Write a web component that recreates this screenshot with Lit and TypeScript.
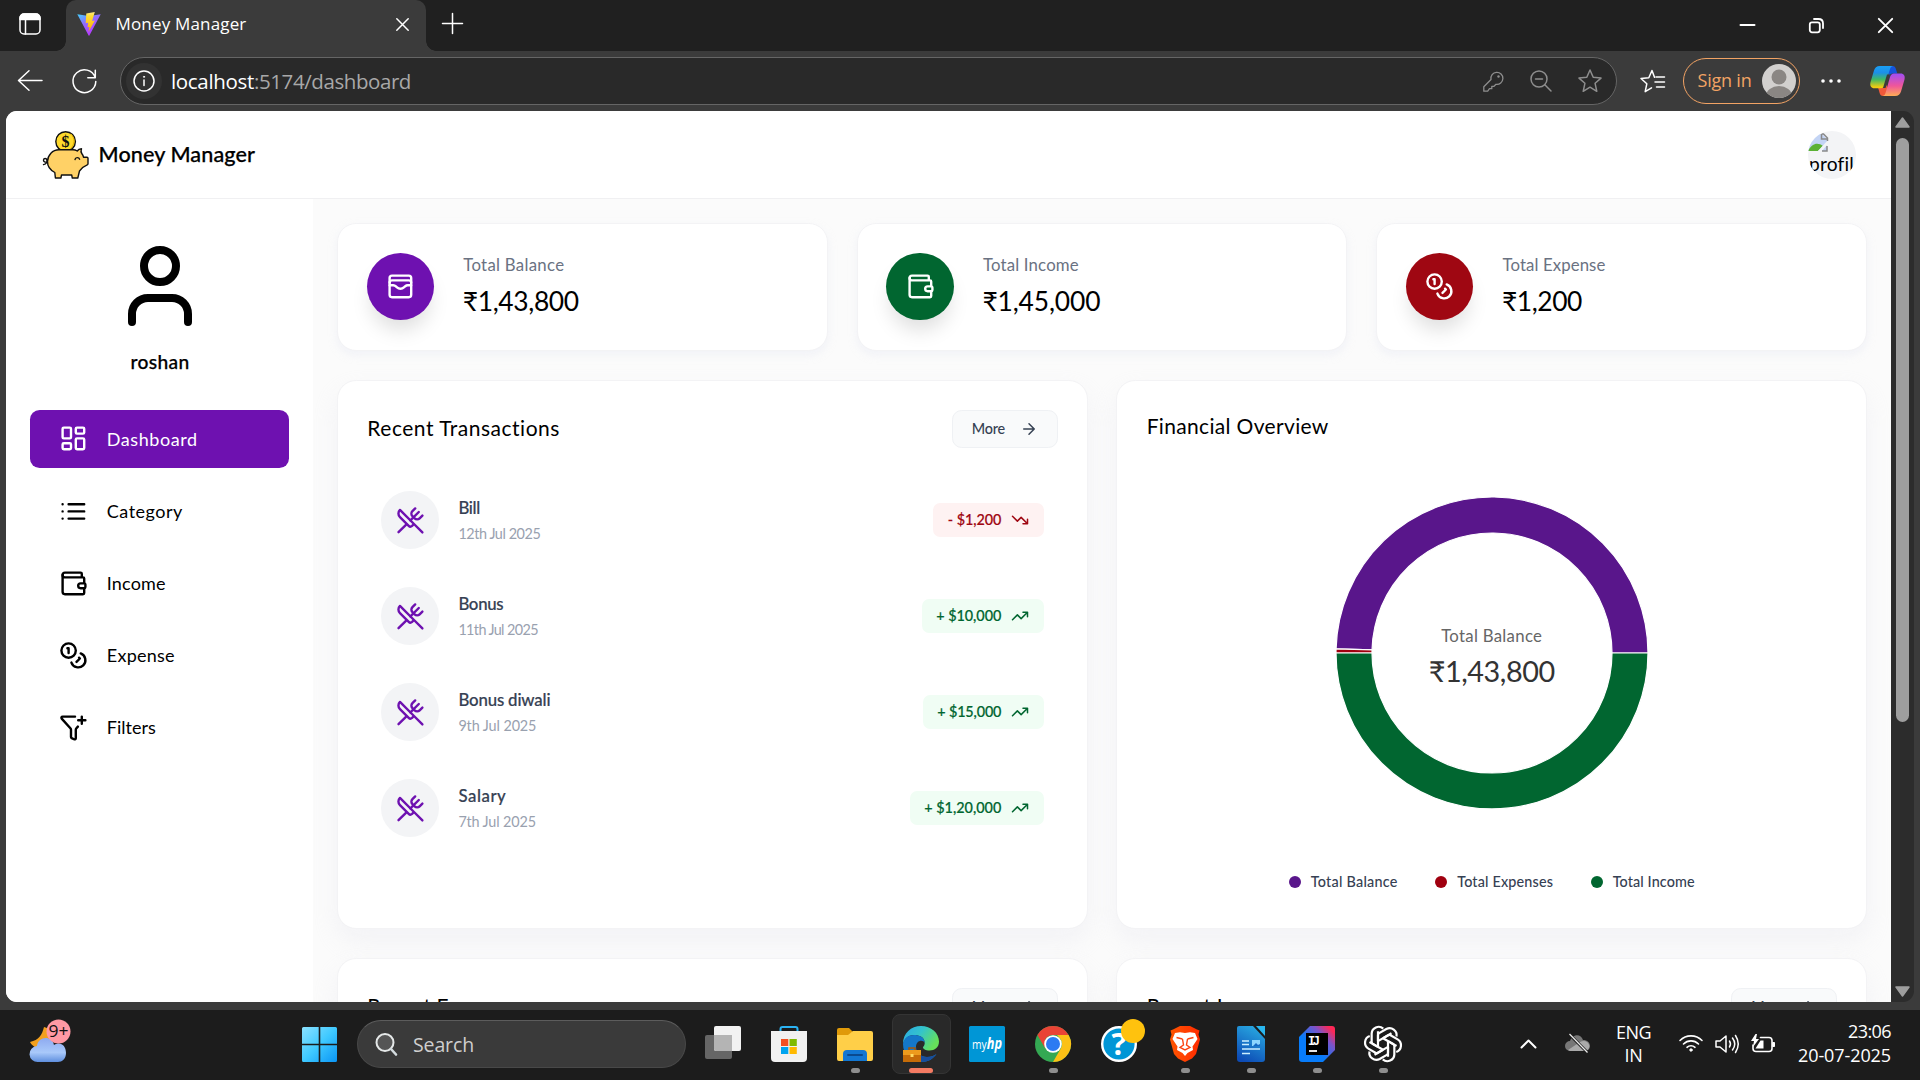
import { LitElement, html, svg, css, TemplateResult, SVGTemplateResult } from "lit";
import { customElement, property } from "lit/decorators.js";

const icons: Record<string, SVGTemplateResult> = {
  user: svg`<path d="M19 21v-2a4 4 0 0 0-4-4H9a4 4 0 0 0-4 4v2"/><circle cx="12" cy="7" r="4"/>`,
  dashboard: svg`<rect width="7" height="9" x="3" y="3" rx="1"/><rect width="7" height="5" x="14" y="3" rx="1"/><rect width="7" height="9" x="14" y="12" rx="1"/><rect width="7" height="5" x="3" y="16" rx="1"/>`,
  list: svg`<path d="M3 12h.01M3 18h.01M3 6h.01M8 12h13M8 18h13M8 6h13"/>`,
  wallet: svg`<path d="M19 7V4a1 1 0 0 0-1-1H5a2 2 0 0 0 0 4h15a1 1 0 0 1 1 1v4h-3a2 2 0 0 0 0 4h3a1 1 0 0 0 1-1v-2a1 1 0 0 0-1-1"/><path d="M3 5v14a2 2 0 0 0 2 2h15a1 1 0 0 0 1-1v-4"/>`,
  coins: svg`<circle cx="8" cy="8" r="6"/><path d="M18.09 10.37A6 6 0 1 1 10.34 18M7 6h1v4M16.71 13.88l.7.71-2.82 2.82"/>`,
  filter: svg`<path d="M13.354 3H3a1 1 0 0 0-.742 1.67l7.225 7.989A2 2 0 0 1 10 14v6a1 1 0 0 0 .553.895l2 1A1 1 0 0 0 14 21v-7a2 2 0 0 1 .517-1.341l1.218-1.348M16 6h6M19 3v6"/>`,
  cards: svg`<rect width="18" height="18" x="3" y="3" rx="2"/><path d="M3 9a2 2 0 0 1 2-2h14a2 2 0 0 1 2 2M3 11h3c.8 0 1.6.3 2.1.9l1.1.9c1.6 1.6 4.1 1.6 5.7 0l1.1-.9c.5-.5 1.3-.9 2.1-.9H21"/>`,
  utensils: svg`<path d="m16 2-2.3 2.3a3 3 0 0 0 0 4.2l1.8 1.8a3 3 0 0 0 4.2 0L22 8"/><path d="M15 15 3.3 3.3a4.2 4.2 0 0 0 0 6l7.3 7.3c.7.7 2 .7 2.8 0L15 15Zm0 0 7 7"/><path d="m2.1 21.8 6.4-6.3M19 5l-7 7"/>`,
  up: svg`<path d="M22 7l-8.5 8.5-5-5L2 17M16 7h6v6"/>`,
  down: svg`<path d="M22 17l-8.5-8.5-5 5L2 7M16 17h6v-6"/>`,
  arrow: svg`<path d="M5 12h14M12 5l7 7-7 7"/>`,
};

const icon = (name: string, cls: string) =>
  html`<svg class="lucide ${cls}" viewBox="0 0 24 24">${icons[name]}</svg>`;

/** Inline text whose tracking is adjusted so that it fills a given advance width. */
@customElement("fit-text")
export class FitText extends LitElement {
  @property({ type: Number }) w = 0;
  static styles = css`
    :host { display: inline-block; white-space: pre; }
    span { display: inline-block; }
  `;
  render() {
    return html`<span><slot></slot></span>`;
  }
  firstUpdated() {
    const span = this.renderRoot.querySelector("span") as HTMLElement;
    const natural = span.getBoundingClientRect().width;
    const count = (this.textContent || "").length;
    if (this.w && count) span.style.letterSpacing = `${(this.w - natural) / count}px`;
  }
}

const fit = (text: string, w: number) => html`<fit-text w=${w}>${text}</fit-text>`;

const base = css`
  * { box-sizing: border-box; }
  svg { display: block; flex: none; overflow: visible; }
  .lucide { fill: none; stroke: currentColor; stroke-width: 2; stroke-linecap: round; stroke-linejoin: round; }
`;

@customElement("browser-bar")
export class BrowserBar extends LitElement {
  static styles = [base, css`
    :host { display: block; font-family: "Open Sans", "Noto Sans", sans-serif; color: #fff; }
    .strip { display: flex; height: 51px; background: #202020; align-items: stretch; }
    .line { fill: none; stroke: currentColor; stroke-width: 1.5; stroke-linecap: round; stroke-linejoin: round; }
    .space { width: 66px; padding: 13px 0 0 19px; }
    .tab { position: relative; width: 360px; background: #3b3b3b; border-radius: 10px 10px 0 0; display: flex; align-items: center; padding: 0 17px 3px 11px; }
    .tab::before, .tab::after { content: ""; position: absolute; bottom: 0; width: 10px; height: 10px; }
    .tab::before { left: -10px; background: radial-gradient(circle at 0 0, #202020 9.5px, #3b3b3b 10px); }
    .tab::after { right: -10px; background: radial-gradient(circle at 100% 0, #202020 9.5px, #3b3b3b 10px); }
    .title { margin-left: 14.5px; font-size: 17px; flex: 1; padding-bottom: 2px; }
    .plus { padding: 13px 0 0 15.5px; flex: 1; }
    .win { display: flex; gap: 54px; padding: 18px 27px 0 0; }
    .bar { height: 60px; background: #3b3b3b; display: flex; align-items: center; padding: 0 15px 0 17px; }
    .reload { margin-left: 29px; }
    .address { margin-left: 23px; width: 1497px; height: 48px; border: 1.5px solid #656565; border-radius: 24px; background: #292929; display: flex; align-items: center; padding: 0 14.5px 0 5px; }
    .info { width: 36px; height: 36px; border-radius: 50%; background: #323232; display: grid; place-items: center; }
    .url { flex: 1; margin-left: 9px; font-size: 20.5px; line-height: 28px; color: #a8a8a8; }
    .host { color: #fff; }
    .tools { display: flex; color: #8e8e8e; align-items: center; }
    .tools svg + svg { margin-left: 26px; }
    .fav { margin-left: 23px; }
    .sign { margin-left: 18px; width: 117px; height: 46px; border: 1.5px solid #f2a364; border-radius: 23px; color: #f2a364; font-size: 18px; display: flex; align-items: center; padding: 0 3.5px 2px 13.5px; justify-content: space-between; }
    .sign svg { margin-top: 2px; }
    .dots { margin-left: 21px; }
    .copilot { margin-left: 28.5px; }
  `];
  render() {
    return html`
      <div class="strip">
        <div class="space"><svg class="line" width="22" height="22" viewBox="0 0 22 22"><rect x="1" y="1" width="20" height="20" rx="4"/><path d="M1 6.5V5a4 4 0 0 1 4-4h12a4 4 0 0 1 4 4v1.500z" fill="#fff"/><path d="M6.500 6v15"/></svg></div>
        <div class="tab">
          <svg width="24" height="24" viewBox="0 0 24 24"><defs><linearGradient id="v" x1="0" y1="0" x2=".6" y2="1"><stop offset="0" stop-color="#41d1ff"/><stop offset=".45" stop-color="#8f6bff"/><stop offset="1" stop-color="#bd34fe"/></linearGradient><linearGradient id="b" x1="0" y1="0" x2="0" y2="1"><stop offset="0" stop-color="#ffea83"/><stop offset=".2" stop-color="#ffdd35"/><stop offset="1" stop-color="#ffa800"/></linearGradient></defs><path d="M.3 2.300 12 4l11.700-1.700L12.400 23.500Q12 24 11.600 23.500z" fill="url(#v)"/><path d="M17.800 0 9.300 1.500 8.700 11.300l2.500-.5-.7 4.400 1.900-.3-1 5.100 6.500-11.400-2.800.4z" fill="url(#b)"/></svg>
          <div class="title">${fit("Money Manager", 131)}</div>
          <svg class="line" width="13" height="13" viewBox="0 0 13 13"><path d="m.8.800 11.400 11.400M12.200.8.800 12.200"/></svg>
        </div>
        <div class="plus"><svg class="line" width="21" height="21" viewBox="0 0 21 21"><path d="M10.500.5v20M.5 10.500h20"/></svg></div>
        <div class="win">
          <svg class="line" width="15" height="15" viewBox="0 0 15 15" stroke-linecap="butt"><path d="M.5 7h14" stroke-width="2"/></svg>
          <svg class="line" width="15" height="15" viewBox="0 0 15 15"><rect x=".8" y="4.300" width="10" height="10" rx="2.200" stroke-width="1.800"/><path d="M5 1h4.500Q14 1 14 5.500V10" stroke-width="1.800"/></svg>
          <svg class="line" width="15" height="15" viewBox="0 0 15 15"><path d="m.8.800 13.400 13.400M14.200.8.800 14.200" stroke-width="1.900"/></svg>
        </div>
      </div>
      <div class="bar">
        <svg class="line" width="26" height="22" viewBox="0 0 26 22"><path d="M25 10.500H2M12 .8 1.500 10.500 12 20.200"/></svg>
        <svg class="line reload" width="25" height="25" viewBox="0 0 25 25"><path d="M23.200 8.500A11.400 11.400 0 1 0 23.800 12.500M23.300 1.200v7.500h-7.500"/></svg>
        <div class="address">
          <div class="info"><svg class="line" width="22" height="22" viewBox="0 0 22 22"><circle cx="11" cy="11" r="10"/><path d="M11 10v5.500"/><circle cx="11" cy="6.800" r=".6" fill="#fff" stroke-width=".8"/></svg></div>
          <div class="url"><span class="host">${fit("localhost", 83)}</span>${fit(":5174/dashboard", 157)}</div>
          <div class="tools">
            <svg class="line" width="21" height="21" viewBox="0 0 21 21"><path d="M8 8.500a6 6 0 1 1 5 4.800l-2 2H8.800v2.400H6.500l-1.800 2.500H.8v-4.500z" stroke-width="1.300"/><circle cx="15.500" cy="5.500" r="1.200" fill="currentColor" stroke="none"/></svg>
            <svg class="line" width="22" height="22" viewBox="0 0 22 22"><circle cx="9" cy="9" r="8"/><path d="M5.500 9h7M14.800 14.800l6.200 6.200"/></svg>
            <svg class="line" width="24" height="24" viewBox="0 0 24 24"><path d="m12 1 3.200 7.300 7.800.8-5.900 5.200 1.700 8L12 18.200 5.200 22.300l1.700-8L1 9.100l7.800-.8z"/></svg>
          </div>
        </div>
        <svg class="line fav" width="25" height="25" viewBox="0 0 25 25"><path d="M14.500 8.300 12 1.500 8.800 8.800 1 9.500l5.800 5.300-1.600 7.900 6.300-3.800M16 8h8.500M15 13h9.500M16.500 18h8"/></svg>
        <div class="sign">${fit("Sign in", 54)}
          <svg width="34" height="34" viewBox="0 0 34 34"><defs><clipPath id="c"><circle cx="17" cy="17" r="17"/></clipPath></defs><g clip-path="url(#c)"><rect width="34" height="34" fill="#d2d0ce"/><circle cx="17" cy="13" r="7.500" fill="#8a8683"/><ellipse cx="17" cy="32" rx="13" ry="10" fill="#8a8683"/></g></svg>
        </div>
        <svg class="dots" width="20" height="4" viewBox="0 0 20 4" fill="#fff"><circle cx="2" cy="2" r="1.800"/><circle cx="10" cy="2" r="1.800"/><circle cx="18" cy="2" r="1.800"/></svg>
        <svg class="copilot" width="35" height="32" viewBox="0 0 35 32"><defs>
          <linearGradient id="p1" x1="0" y1="0" x2="0" y2="1"><stop offset="0" stop-color="#1aa0f5"/><stop offset=".3" stop-color="#1c8fe8"/><stop offset=".6" stop-color="#3fb865"/><stop offset=".95" stop-color="#f2cb10"/></linearGradient>
          <linearGradient id="p2" x1="0" y1="0" x2="0" y2="1"><stop offset="0" stop-color="#a04df5"/><stop offset=".55" stop-color="#f0569a"/><stop offset="1" stop-color="#ffad55"/></linearGradient></defs>
          <path d="M17 1h5.500c2 0 2.800 1.200 3.400 3l1.400 4.500h-4.500c-2.500 0-3.300 1.500-4 4z" fill="#1554dd"/>
          <path d="M17.500 31H13c-2 0-2.800-1.200-3.400-3L8.200 23h4.600c2.500 0 3.300-1.500 4-4z" fill="#f0593a"/>
          <path d="M10 1h13c-2 .3-2.700 1.800-3.300 4L15 20c-.7 2.200-2 3.200-4 3.200H4.500c-3.500 0-4.800-2.500-4-6L4 5.500C4.800 2.800 6.500 1 10 1z" fill="url(#p1)"/>
          <path d="M25 31H12.500c2-.3 2.700-1.800 3.300-4L20 12c.7-2.200 2-3.400 4-3.400h6.500c3.500 0 4.800 2.500 4 6L31 26.500c-.8 2.700-2.500 4.500-6 4.500z" fill="url(#p2)"/>
          <path d="M20 9.500h-3L13 23h2.500z" fill="#3b3b3b"/></svg>
      </div>`;
  }
}

interface Tx { title: string; tw: number; date: string; dw: number; amount: string; aw: number; income: boolean; }
const transactions: Tx[] = [
  { title: "Bill", tw: 21.5, date: "12th Jul 2025", dw: 82, amount: "- $1,200", aw: 53.5, income: false },
  { title: "Bonus", tw: 45, date: "11th Jul 2025", dw: 79.5, amount: "+ $10,000", aw: 65, income: true },
  { title: "Bonus diwali", tw: 92, date: "9th Jul 2025", dw: 78, amount: "+ $15,000", aw: 64, income: true },
  { title: "Salary", tw: 48, date: "7th Jul 2025", dw: 77.5, amount: "+ $1,20,000", aw: 77, income: true },
];
const menu: [string, string, number][] = [
  ["dashboard", "Dashboard", 91], ["list", "Category", 76], ["wallet", "Income", 59],
  ["coins", "Expense", 68], ["filter", "Filters", 49],
];
const stats: [string, string, string, number, string, number][] = [
  ["violet", "cards", "Total Balance", 101, "₹1,43,800", 116],
  ["green", "wallet", "Total Income", 96, "₹1,45,000", 118],
  ["red", "coins", "Total Expense", 103, "₹1,200", 80],
];
const slices = [
  { label: "Total Balance", value: 143800, color: "#59168b", w: 87 },
  { label: "Total Expenses", value: 1200, color: "#a0000f", w: 96 },
  { label: "Total Income", value: 145000, color: "#016630", w: 82 },
];

@customElement("money-dashboard")
export class MoneyDashboard extends LitElement {
  static styles = [base, css`
    :host { display: flex; flex-direction: column; height: 891px; overflow: hidden; background: #fbfbfb; font-family: Lato, "Open Sans", sans-serif; color: #000; }
    header { flex: none; height: 88px; background: #fff; border-bottom: 1px solid #f0f0f2; display: flex; align-items: center; padding: 0 35px; }
    .brand { flex: 1; margin-left: 9.5px; padding-bottom: 1px; font-size: 21.6px; font-weight: 500; -webkit-text-stroke: .25px; }
    .avatar { width: 48px; height: 48px; border-radius: 50%; background: #f3f4f6; overflow: hidden; font-size: 19.2px; line-height: 24px; padding-top: 2px; }
    .alt { padding: 1.5px 0 0 1px; }
    .body { display: flex; flex: 1; min-height: 0; }
    aside { flex: none; width: 307px; background: #fff; padding: 39px 24px 0; display: flex; flex-direction: column; }
    .user { width: 96px; height: 96px; margin: 0 auto; }
    .name { text-align: center; font-size: 19.2px; line-height: 28px; font-weight: 500; margin-top: 14px; padding-left: 1px; -webkit-text-stroke: .25px; }
    nav { margin-top: 34px; display: grid; gap: 14.4px; }
    .item { height: 57.700px; border-radius: 9.600px; display: flex; align-items: center; gap: 19.200px; padding: 0 28.800px; font-size: 18px; }
    .active { background: #6e11b0; color: #fff; }
    .i24 { width: 28.800px; height: 28.800px; }
    .i15 { width: 18px; height: 18px; }
    main { flex: 1; padding: 24px 24px 0; display: flex; flex-direction: column; gap: 29px; min-width: 0; }
    .three { flex: none; display: grid; grid-template-columns: repeat(3, 1fr); gap: 28.800px; }
    .two { flex: none; display: grid; grid-template-columns: 1fr 1fr; gap: 28.800px; }
    .card { background: #fff; border: 1px solid #f3f3f5; border-radius: 19.200px; box-shadow: 0 4px 8px rgba(224, 226, 240, .35); }
    .stat { height: 128px; display: flex; gap: 28.800px; padding: 28.800px; }
    .disc { width: 67.200px; height: 67.200px; border-radius: 50%; color: #fff; display: grid; place-items: center; box-shadow: 0 14px 20px -4px rgba(0, 0, 0, .13); }
    .violet { background: #6e11b0; } .green { background: #016630; } .red { background: #9f0712; }
    .label { font-size: 16.800px; line-height: 24px; color: #6a7282; margin: 0 0 4.500px .5px; }
    .value { font-size: 26.400px; line-height: 40px; }
    .panel { height: 549px; padding: 28.800px; box-shadow: 0 12px 24px rgba(224, 226, 236, .3); }
    .head { display: flex; justify-content: space-between; align-items: center; height: 38.400px; font-size: 21px; }
    .head > fit-text { margin-top: -2px; margin-left: .5px; }
    .head.plain { height: 34px; }
    .more { width: 106px; height: 38.400px; border: 1px solid #eff1f4; border-radius: 9.600px; background: #f9fafb; color: #364153; display: flex; align-items: center; justify-content: space-between; padding: 0 19px; font-size: 14.400px; font-weight: 500; }
    .more fit-text { margin-top: -1px; }
    .rows { margin: 43px 14px 0 14.700px; display: grid; gap: 38.400px; }
    .tx { height: 57.600px; display: flex; align-items: center; }
    .ring { width: 57.600px; height: 57.600px; border-radius: 50%; background: #f3f4f6; color: #6e11b0; display: grid; place-items: center; }
    .what { flex: 1; margin-left: 19.300px; }
    .t { font-size: 16.800px; line-height: 24px; font-weight: 500; color: #364153; -webkit-text-stroke: .2px; }
    .d { font-size: 14.400px; line-height: 19px; margin-top: 4px; color: #99a1af; }
    .badge { height: 34px; border-radius: 7.200px; padding: 0 14.500px; display: flex; align-items: center; gap: 10px; font-size: 14.400px; font-weight: 500; background: #f0fdf4; color: #016630; -webkit-text-stroke: .2px; }
    .badge fit-text { margin-top: -1px; }
    .expense { background: #fef2f2; color: #9f0712; }
    .chart { display: flex; flex-direction: column; align-items: center; padding-top: 49px; }
    .donut { display: grid; place-items: center; }
    .donut > * { grid-area: 1 / 1; }
    .center { text-align: center; padding-top: 7px; }
    .cl { font-size: 16.800px; line-height: 24px; color: #666; }
    .cv { font-size: 28.800px; line-height: 36px; color: #333; margin-top: 5px; }
    .legend { display: flex; gap: 37.500px; margin-top: 60px; font-size: 14.400px; font-weight: 500; color: #364153; }
    .key { display: flex; align-items: center; gap: 10px; line-height: 20px; }
    .key fit-text { margin-top: -1px; }
  `];

  private donut(): TemplateResult {
    const total = slices.reduce((sum, s) => sum + s.value, 0);
    const at = (r: number, a: number) => `${160 + r * Math.cos(a)} ${160 - r * Math.sin(a)}`;
    let start = 0;
    const arcs = slices.map((s) => {
      const end = start + (s.value / total) * Math.PI * 2;
      const large = end - start > Math.PI ? 1 : 0;
      const d = `M${at(156, start)}A156 156 0 ${large} 0 ${at(156, end)}L${at(120, end)}A120 120 0 ${large} 1 ${at(120, start)}Z`;
      start = end;
      return svg`<path d=${d} fill=${s.color} stroke="#fff" stroke-width="1.200"/>`;
    });
    return html`<svg width="320" height="320" viewBox="0 0 320 320">${arcs}</svg>`;
  }

  private more() {
    return html`<div class="more">${fit("More", 33)}${icon("arrow", "i15")}</div>`;
  }

  render() {
    return html`
      <header>
        <svg width="48" height="48" viewBox="0 0 48 48" stroke="#111" stroke-width="1.400" stroke-linejoin="round" stroke-linecap="round">
          <path d="M6.500 31c-2.200.6-4.200-.2-4-2 .2-1.900 3-2 3.400 0 .4 2.200-.8 4-3.400 4.600" fill="none"/>
          <circle cx="24.600" cy="10.500" r="9.800" fill="#ffda2d"/><path d="M30 3a9.500 9.500 0 0 1-1 15" fill="none" stroke="#e0b000" stroke-width="1"/>
          <text x="24.600" y="16" text-anchor="middle" font-size="16" font-family="Liberation Serif, serif" font-weight="700" fill="#111" stroke="none">$</text>
          <path d="M18 18.800h14c1.500 0 3 .5 4.200 1.200 1-1.500 2.600-2.200 4.300-2.200-.8 2-.7 3.500.4 5 .8 1 1.400 2.200 1.600 3.400h3.500c.7 0 1 .4 1 1v5.500c0 .8-.4 1.200-1.200 1.500-3.300 1.200-5.300 3.300-7.300 5.800L36.800 47h-5.500l-.6-3H20.500l-.6 3h-5.500l-.6-5.500C9.200 39 6.400 35 6.500 30.500 6.700 24 11.500 18.800 18 18.800z" fill="#ffd166"/>
          <path d="M34 28.500c.5-2.400 3.800-2.500 4.600-.3" fill="none"/>
        </svg>
        <div class="brand">${fit("Money Manager", 156.500)}</div>
        <div class="avatar">
          <svg width="20" height="18" viewBox="0 0 20 18"><path d="M0 1h14l5 5v12H0z" fill="#c3d4f5"/><path d="M0 18C4 10 10 9 15 13l-5 5z" fill="#5bb135"/><path d="M9 19 20 7v4l-7 8z" fill="#f3f4f6"/><path d="M13.500 1h2l4 4v3M13.500 1v5H19M19 13v5h-5" fill="none" stroke="#8a8a8a" stroke-width="1.500"/></svg>
          <div class="alt">${fit("profile", 55)}</div>
        </div>
      </header>
      <div class="body">
        <aside>
          ${icon("user", "user")}
          <div class="name">${fit("roshan", 59)}</div>
          <nav>${menu.map(([ic, label, w], i) => html`<div class="item ${i === 0 ? "active" : ""}">${icon(ic, "i24")}${fit(label, w)}</div>`)}</nav>
        </aside>
        <main>
          <div class="three">
            ${stats.map(([color, ic, label, lw, value, vw]) => html`
              <div class="card stat"><div class="disc ${color}">${icon(ic, "i24")}</div>
                <div><div class="label">${fit(label, lw)}</div><div class="value">${fit(value, vw)}</div></div></div>`)}
          </div>
          <div class="two">
            <div class="card panel">
              <div class="head">${fit("Recent Transactions", 193)}${this.more()}</div>
              <div class="rows">${transactions.map((t) => html`
                <div class="tx"><div class="ring">${icon("utensils", "i24")}</div>
                  <div class="what"><div class="t">${fit(t.title, t.tw)}</div><div class="d">${fit(t.date, t.dw)}</div></div>
                  <div class="badge ${t.income ? "" : "expense"}">${fit(t.amount, t.aw)}${icon(t.income ? "up" : "down", "i15")}</div></div>`)}
              </div>
            </div>
            <div class="card panel">
              <div class="head plain">${fit("Financial Overview", 182)}</div>
              <div class="chart">
                <div class="donut">${this.donut()}
                  <div class="center"><div class="cl">${fit("Total Balance", 101)}</div><div class="cv">${fit("₹1,43,800", 126)}</div></div></div>
                <div class="legend">${slices.map((s) => html`<div class="key"><svg width="12" height="12" viewBox="0 0 12 12"><circle cx="6" cy="6" r="6" fill=${s.color}/></svg>${fit(s.label, s.w)}</div>`)}</div>
              </div>
            </div>
          </div>
          <div class="two">
            <div class="card panel"><div class="head">${fit("Recent Expenses", 156)}${this.more()}</div></div>
            <div class="card panel"><div class="head">${fit("Recent Incomes", 148)}${this.more()}</div></div>
          </div>
        </main>
      </div>`;
  }
}

const petals = [0, 60, 120, 180, 240, 300];
const apps: { mark: string; art: SVGTemplateResult }[] = [
  { mark: "", art: svg`<rect x="0" y="9" width="27" height="24" rx="2" fill="#666"/><rect x="9" y="0" width="27" height="25" rx="2" fill="#f2f2f2"/><path d="M9 9h18v16H11q-2 0-2-2z" fill="#b4b4b4"/>` },
  { mark: "", art: svg`<path d="M9.500 7V3q0-2 2-2h13q2 0 2 2v4" fill="none" stroke="#2bb3f3" stroke-width="2"/><path d="M0 5h36v27q0 4-4 4H4q-4 0-4-4z" fill="#f1f1f1"/><path d="M10 13h7.300v7H10z" fill="#f25022"/><path d="M18.500 13h7.300v7h-7.300z" fill="#7fba00"/><path d="M10 21h7.300v7H10z" fill="#00a4ef"/><path d="M18.500 21h7.300v7h-7.300z" fill="#ffb900"/>` },
  { mark: "dot", art: svg`<path d="M0 4q0-2 2-2h10l4 4v6H0z" fill="#e09a09"/><path d="M0 9h11l5-4h18q2 0 2 2V33q0 2-2 2H2q-2 0-2-2z" fill="#ffcf48"/><path d="M6 35v-7q0-4 4-4h16q4 0 4 4v7z" fill="#1277d3"/><path d="M11 29h14" stroke="#0a4a8f" stroke-width="2" stroke-linecap="round"/>` },
  { mark: "wide", art: svg`<defs><linearGradient id="e1" x1="0" y1="0" x2="1" y2=".5"><stop offset="0" stop-color="#2aa8e6"/><stop offset=".5" stop-color="#34c4cb"/><stop offset="1" stop-color="#66e05a"/></linearGradient></defs><path d="M0 18C0 7 8 0 18 0s18 7 18 15.500c0 6-4.500 9-9.500 9-4 0-6.500-1.500-6.500-3 0-1 1.700-1.500 1.700-4.500C21.700 11 16 9 11 9 5 9 1.500 13 0 18z" fill="url(#e1)"/><path d="M0 18C1 12 5 9 11 9c5 0 10.700 2 10.700 8-1.500-4-8.700-3-8.700 4 0 6 5 10 11 10 4 0 7-1 9.500-3C30 33 25 36 18 36 8 36 0 29 0 18z" fill="#1477c9"/><path d="M13 21c0 6 5 10 11 10 4 0 7-1 9.500-3C30 33 25 36 18 36c-6 0-8-8-5-15z" fill="#174e9c"/><path d="M0 24h18v12H0z" fill="#c66c08"/><path d="M0 24h18v5H0z" fill="#ed9b1d"/><path d="M6 24v-2h6v2" fill="none" stroke="#a55505" stroke-width="1.500"/><path d="M7.500 28h3v3h-3z" fill="#ffda63"/>` },
  { mark: "", art: svg`<rect width="36" height="36" rx="1.500" fill="#0096d6"/><text x="18" y="23" text-anchor="middle" font-family="Open Sans, sans-serif" font-size="12.500" fill="#fff" textLength="30" lengthAdjust="spacingAndGlyphs">my<tspan font-weight="700" font-style="italic" font-size="15.500">hp</tspan></text>` },
  { mark: "dot", art: svg`<circle cx="18" cy="18" r="18" fill="#34a853"/><path d="M2.400 9A18 18 0 0 1 33.600 9H18a9 9 0 0 0-7.800 4.500L10 22z" fill="#e94335"/><path d="M33.600 9A18 18 0 0 1 18 36l7.800-13.500A9 9 0 0 0 25.800 13.500L22 9z" fill="#fbc116"/><circle cx="18" cy="18" r="8.800" fill="#fff"/><circle cx="18" cy="18" r="7" fill="#2c7bf2"/>` },
  { mark: "", art: svg`<circle cx="18" cy="18" r="16.800" fill="#0096d6" stroke="#fff" stroke-width="2.400"/><text x="18" y="29" text-anchor="middle" font-family="Open Sans, sans-serif" font-weight="700" font-size="31" fill="#fff">?</text><circle cx="32" cy="5" r="12" fill="#ffc20e"/>` },
  { mark: "dot", art: svg`<defs><linearGradient id="br" x1="0" y1="0" x2="1" y2="0"><stop offset="0" stop-color="#ff5601"/><stop offset="1" stop-color="#ff2a00"/></linearGradient></defs><path d="m9 2 4-2h10l4 2 3 1.500 2.500 1-1 4 1.500 5-4 14.500-4 4.500-7 3.500-7-3.500L7 28l-4-14.500 1.500-5-1-4L6 3.500z" fill="url(#br)"/><path d="m8 7 5-.8 5 .9 5-.9 5 .8 2.500 6-5 7.500.5 3.500-5.500 3L18 30l-2.500-3-5.500-3 .5-3.500-5-7.500z" fill="#fff"/><path d="m9.500 11.500 6 1.500M26.500 11.500l-6 1.500M15.500 13l1 6-3.500 2.500 5 2.500 5-2.500-3.500-2.500 1-6" fill="none" stroke="#fc4210" stroke-width="1.400"/>` },
  { mark: "dot", art: svg`<defs><linearGradient id="w" x1=".7" y1="0" x2=".3" y2="1"><stop offset="0" stop-color="#28a9e1"/><stop offset="1" stop-color="#0d4bb5"/></linearGradient></defs><path d="M6 0h14l12 13v20q0 3-3 3H7q-3 0-3-3V2q0-2 2-2z" fill="url(#w)"/><path d="M23 0h9v10z" fill="#29b6ee"/><path d="M9 15h7M9 18.500h7M9 23h18M9 27.500h8" stroke="#cceeff" stroke-width="1.600"/><path d="M19 14h8v6h-8z" fill="#8bd6ff"/><path d="m20 20 3-3 2 2 2-1v2z" fill="#1469c4"/>` },
  { mark: "dot", art: svg`<defs><linearGradient id="ij" x1="0" y1="1" x2="1" y2="0"><stop offset=".4" stop-color="#087cfa"/><stop offset=".7" stop-color="#7b53c9"/><stop offset=".9" stop-color="#fe2857"/></linearGradient></defs><path d="M11 0h22q3 0 3 3v21L24 36H3q-3 0-3-3V11z" fill="url(#ij)"/><rect x="7" y="7" width="22" height="22" fill="#000"/><text x="9" y="18.500" font-family="Liberation Mono, monospace" font-weight="700" font-size="12" fill="#fff" textLength="12">IJ</text><path d="M10 25h8" stroke="#fff" stroke-width="1.800"/>` },
  { mark: "dot", art: svg`${petals.map((a) => svg`<path transform="rotate(${a} 18 18)" d="M13 20.900V9.200Q13 7.800 14.200 7.100L21.300 3A7 7 0 0 1 31.500 10.500M18 12.200 26.500 7.300" fill="none" stroke="#fff" stroke-width="2.200"/>`)}` },
];

@customElement("task-bar")
export class TaskBar extends LitElement {
  static styles = [base, css`
    :host { display: flex; height: 70px; background: #1c1c1c; font-family: "Open Sans", "Noto Sans", sans-serif; color: #fff; font-size: 18px; padding-bottom: 2px; align-items: center; }
    .weather { width: 302px; padding-left: 29px; margin-top: -7px; }
    .search { margin-left: 20px; width: 329px; height: 48px; border-radius: 24px; background: #3a3a3a; border: 1px solid #484848; border-top-color: #5c5c5c; display: flex; align-items: center; padding: 0 17px; gap: 15px; color: #cfcfcf; font-size: 19.5px; }
    .apps { margin-left: 4px; display: flex; flex: 1; }
    .app { width: 66px; height: 60px; display: flex; flex-direction: column; align-items: center; justify-content: flex-end; }
    .tile { height: 60px; width: 59px; border-radius: 8px; display: flex; flex-direction: column; align-items: center; padding-top: 12px; gap: 6px; }
    .tile.wide { background: #292929; border: 1px solid #343434; padding-top: 11px; }
    .mark { width: 9px; height: 5px; border-radius: 3px; background: transparent; }
    .mark.dot { background: #8e8e8e; }
    .mark.wide { width: 24px; background: #f47b63; }
    .tray { display: flex; align-items: center; padding-right: 29px; }
    .cloud { margin-left: 28px; }
    .lang { margin-left: 24px; width: 40px; text-align: center; line-height: 23px; margin-top: -1px; }
    .status { display: flex; gap: 12px; margin-left: 25px; }
    .clock { margin-left: 23.500px; text-align: right; line-height: 24px; margin-top: -2px; }
    .line { fill: none; stroke: #fff; stroke-width: 2; stroke-linecap: round; stroke-linejoin: round; }
  `];
  render() {
    return html`
      <div class="weather"><svg width="42" height="44" viewBox="0 0 42 44"><defs><linearGradient id="cl" x1="0" y1="0" x2="0" y2="1"><stop offset="0" stop-color="#8eaaf0"/><stop offset=".6" stop-color="#a9c9fa"/><stop offset="1" stop-color="#5f8fde"/></linearGradient></defs>
        <path d="M15 8c-2 8-5 13-14 15 4 8 15 8 20 2V10z" fill="#f2a01e"/><path d="M9 43a8 8 0 0 1-1-16C9 17 23 16 25 26c6-4 12 0 12 8 0 6-4 9-8 9z" fill="url(#cl)"/><circle cx="29.500" cy="12.500" r="12" fill="#ff99a4"/><text x="29.500" y="18" font-family="Open Sans, sans-serif" font-size="16" text-anchor="middle" fill="#111" textLength="20" lengthAdjust="spacingAndGlyphs">9+</text></svg></div>
      <svg width="35" height="35" viewBox="0 0 35 35"><defs><linearGradient id="wn" x1="0" y1="0" x2="1" y2="1"><stop offset="0" stop-color="#8be1ff"/><stop offset=".5" stop-color="#3fc9ff"/><stop offset="1" stop-color="#0a95f5"/></linearGradient></defs><path d="M1.500 0H16.700v16.700H0V1.500Q0 0 1.500 0zM18.300 0h15.200Q35 0 35 1.500v15.200H18.300zM0 18.300h16.700V35H1.500Q0 35 0 33.500zM18.300 18.300H35v15.200q0 1.500-1.500 1.500H18.300z" fill="url(#wn)"/></svg>
      <div class="search"><svg width="23" height="23" viewBox="0 0 23 23"><circle cx="10" cy="9.500" r="8.500" fill="#555" stroke="#e5e8e8" stroke-width="2"/><path d="m16 16 5 5.500" stroke="#d4dcdf" stroke-width="2.600" stroke-linecap="round"/></svg>${fit("Search", 61)}</div>
      <div class="apps">${apps.map((a) => html`<div class="app"><div class="tile ${a.mark === "wide" ? "wide" : ""}"><svg width="36" height="36" viewBox="0 0 36 36">${a.art}</svg><div class="mark ${a.mark}"></div></div></div>`)}</div>
      <div class="tray">
        <svg class="line" width="17" height="10" viewBox="0 0 17 10"><path d="m1.500 8.500 7-7 7 7"/></svg>
        <svg class="cloud" width="25" height="20" viewBox="0 0 25 20"><path d="M5 17a5 5 0 0 1 0-10C7 0 16-1 18 6c9 0 9 11 2 11z" fill="#777"/><path d="M3 16 15 8c8-4 13 6 6 9H5z" fill="#aaa"/><path d="m4 0 18 18" stroke="#1c1c1c" stroke-width="3"/><path d="m4.500 0 18 18.500" stroke="#eee" stroke-width="1.200"/></svg>
        <div class="lang">${fit("ENG", 35)}<br>${fit("IN", 18)}</div>
        <div class="status">
          <svg class="line" width="24" height="18" viewBox="0 0 24 18"><path d="M1 6.500a15.500 15.500 0 0 1 22 0M4.500 10a10.500 10.500 0 0 1 15 0M8 13.300a5.800 5.800 0 0 1 8 0" stroke-width="1.600"/><circle cx="12" cy="16" r="1.200" fill="#fff" stroke-width="1"/></svg>
          <svg class="line" width="24" height="20" viewBox="0 0 24 20"><path d="M1 7v6h4l6 5V2L5 7zM14.500 7q2 3 0 6M17.500 4q4.500 6 0 12M20.500 1.500q5.500 8.500 0 17" stroke-width="1.500"/></svg>
          <svg class="line" width="24" height="20" viewBox="0 0 24 20"><path d="M9.500 3.500H18q3 0 3 3v8q0 3-3 3H5q-3 0-3-3V11" stroke-width="1.600"/><path d="M22 8.500h1.500v4H22z" fill="#fff" stroke-width="1"/><path d="M9.500 6.500h3v8h-8z" fill="#fff" stroke="none"/><path d="M4.500 0 0 7h3l-1 6 6-8H5l1-5z" fill="#fff" stroke="none"/></svg>
        </div>
        <div class="clock">${fit("23:06", 43)}<br>${fit("20-07-2025", 93)}</div>
      </div>`;
  }
}

@customElement("app-root")
export class AppRoot extends LitElement {
  static styles = [base, css`
    :host { display: block; width: 1920px; height: 1080px; overflow: hidden; background: #3b3b3b; }
    .view { display: flex; height: 899px; padding: 0 6px 8px; }
    .page { width: 1885px; height: 891px; border-radius: 11px 0 0 11px; overflow: hidden; }
    .scroll { width: 23px; background: #2c2c2c; border-radius: 0 11px 11px 0; display: flex; flex-direction: column; align-items: center; padding: 6px 0 5px; height: 891px; }
    .thumb { width: 13px; height: 584px; margin-top: 10px; border-radius: 7px; background: #9e9e9e; }
    .fill { flex: 1; }
  `];
  render() {
    return html`
      <browser-bar></browser-bar>
      <div class="view">
        <div class="page"><money-dashboard></money-dashboard></div>
        <div class="scroll">
          <svg width="15" height="11" viewBox="0 0 15 11"><path d="M7.500 1 14 10H1z" fill="#9e9e9e" stroke="#9e9e9e" stroke-linejoin="round" stroke-width="1.500"/></svg>
          <div class="thumb"></div><div class="fill"></div>
          <svg width="15" height="11" viewBox="0 0 15 11"><path d="M7.500 10 14 1H1z" fill="#9e9e9e" stroke="#9e9e9e" stroke-linejoin="round" stroke-width="1.500"/></svg>
        </div>
      </div>
      <task-bar></task-bar>`;
  }
}
